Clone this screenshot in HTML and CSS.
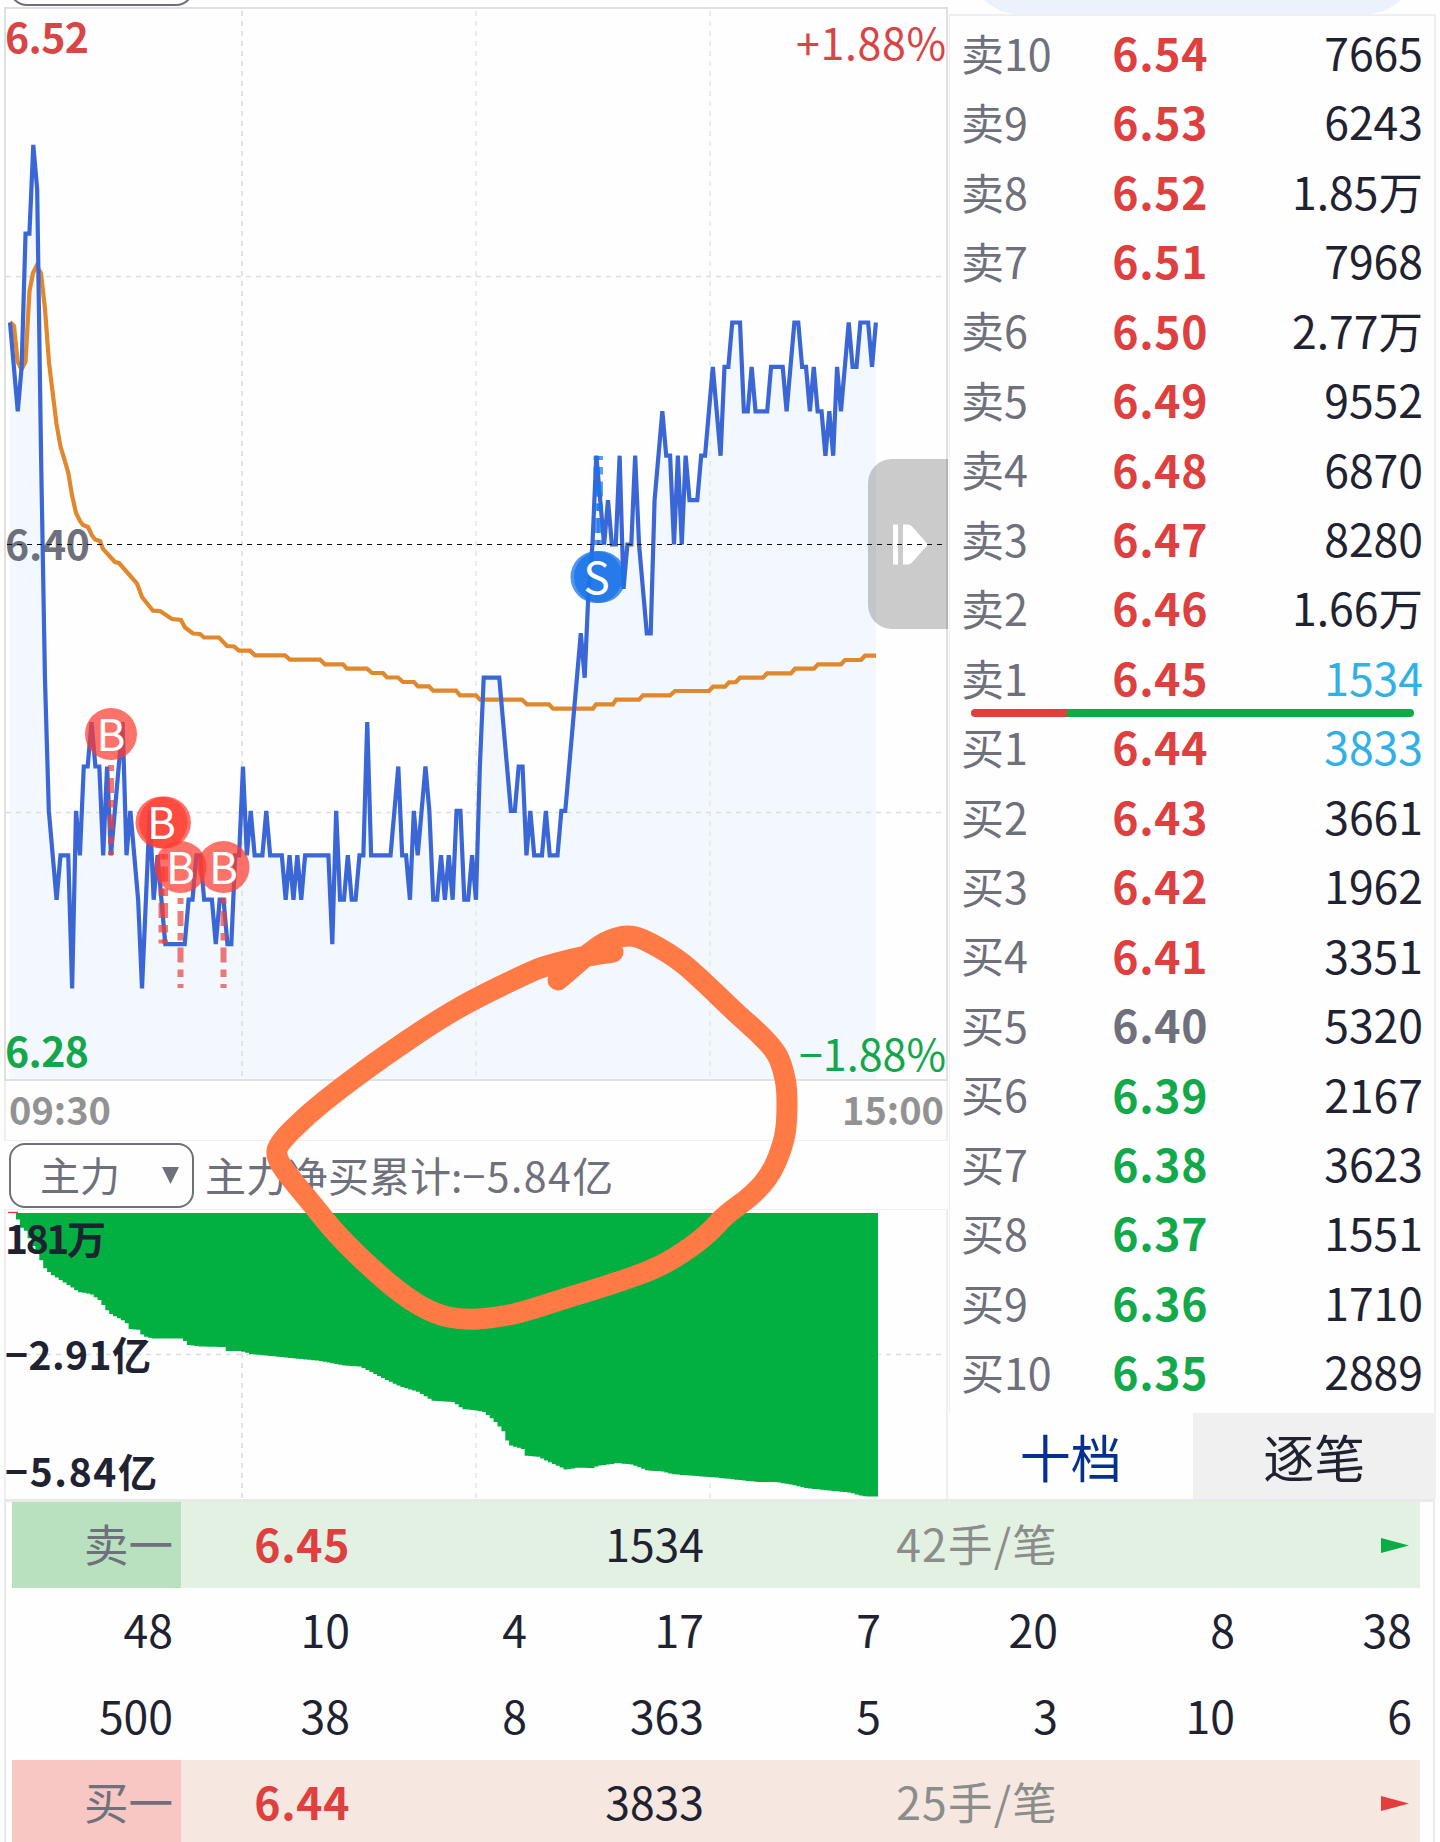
FILE: index.html
```html
<!DOCTYPE html>
<html lang="zh-CN">
<head>
    <meta charset="UTF-8">
    <title>分时</title>
    <link rel="stylesheet" href="styles.css">
</head>
<body>
    <div class="page">
        <div class="main">
            <div class="chart-col">
                <div class="chart-top"><div class="select-edge"></div></div>

                <svg class="price-chart" viewBox="6 9 940 1070">
                    <path id="priceArea" class="area"/>
                    <g class="grid">
                        <path d="M242 11V1079M6 276.5H946M6 812.5H946"/>
                        <path class="light" d="M476 11V1079M710 11V1079"/>
                    </g>
                    <text class="axis up" x="5" y="53" textLength="84">6.52</text>
                    <text class="axis flat" x="5" y="559.5" textLength="85">6.40</text>
                    <text class="axis down" x="5" y="1067" textLength="84">6.28</text>
                    <text class="rate up" x="796" y="60" textLength="150">+1.88%</text>
                    <text class="rate down" x="799" y="1070.5" textLength="147">−1.88%</text>
                    <polyline id="avgLine" class="avg"/>
                    <polyline id="priceLine" class="price"/>
                    <g id="marks"></g>
                    <path class="handle" d="M948 459H892a24 24 0 0 0-24 24v122a24 24 0 0 0 24 24h56z"/>
                    <path class="handle-icon" d="M893 524.500h5v40h-5zM903 524.500h5q2 0 4 2l16 18l-16 18q-2 2-4 2h-5z"/>
                    <path class="base" d="M7 544.500H943"/>
                </svg>

                <div class="times">
                    <span>09:30</span>
                    <span>15:00</span>
                </div>

                <div class="fund-head">
                    <div class="select">
                        <span>主力</span>
                        <svg width="17" height="17" viewBox="0 0 17 17"><path d="M0 0h17L8.500 17z"/></svg>
                    </div>
                    <span class="fund-title">主力净买累计:<span class="fund-sum">−5.84亿</span></span>
                </div>

                <svg class="fund-chart" viewBox="6 1210 940 289">
                    <g class="grid">
                        <path d="M242 1213V1499M6 1354.500H946"/>
                        <path class="light" d="M476 1213V1499M710 1213V1499"/>
                    </g>
                    <path id="fundBars" class="bars"/>
                    <path class="fund-start" d="M8 1212.500H18"/>
                    <text class="fund-label" x="5" y="1254" textLength="101">181万</text>
                    <text class="fund-label" x="5" y="1370" textLength="146">−2.91亿</text>
                    <text class="fund-label" x="5" y="1486.500" textLength="152">−5.84亿</text>
                </svg>
            </div>

            <div class="book-col">
                <div class="book-top"><div class="pill-edge"></div></div>
                <div class="book">
                    <div id="sells"></div>
                    <div class="ratio"><div class="ratio-sell"></div><div class="ratio-buy"></div></div>
                    <div id="buys"></div>
                </div>
                <div class="tabs">
                    <div class="tab active">十档</div>
                    <div class="tab">逐笔</div>
                </div>
            </div>
        </div>

        <div class="queue">
            <div class="queue-row sell">
                <span class="name">卖一</span><span class="cost">6.45</span><span></span><span>1534</span><span></span><span class="avg-hand">42手/笔</span><span></span>
                <span><svg width="28" height="15" viewBox="0 0 28 15"><path d="M0 0L28 7.500L0 15z"/></svg></span>
            </div>
            <div class="queue-row">
                <span>48</span><span>10</span><span>4</span><span>17</span><span>7</span><span>20</span><span>8</span><span>38</span>
            </div>
            <div class="queue-row">
                <span>500</span><span>38</span><span>8</span><span>363</span><span>5</span><span>3</span><span>10</span><span>6</span>
            </div>
            <div class="queue-row buy">
                <span class="name">买一</span><span class="cost">6.44</span><span></span><span>3833</span><span></span><span class="avg-hand">25手/笔</span><span></span>
                <span><svg width="28" height="15" viewBox="0 0 28 15"><path d="M0 0L28 7.500L0 15z"/></svg></span>
            </div>
        </div>

        <!-- hand-drawn mark over both charts -->
        <svg class="pen" viewBox="0 0 1440 1842">
            <path id="penLine"/>
        </svg>
    </div>

    <script src="script.js"></script>
</body>
</html>
```

FILE: styles.css
```css
* {
    box-sizing: border-box;
}

body {
    margin: 0;
    background-color: #fefefe;
    font-family: "Noto Sans CJK SC", sans-serif;
    color: #1e2231;
}

.page {
    position: relative;
    width: 1440px;
    height: 1842px;
    overflow: hidden;
}

.main {
    display: flex;
    height: 1499px;
}

/* left column */
.chart-col {
    width: 944px;
    margin-left: 4px;
}

.chart-top {
    height: 7px;
    padding-left: 5px;
    overflow: hidden;
}

.select-edge {
    width: 185px;
    height: 65px;
    margin-top: -59px;
    border: 2px solid #6e707c;
    border-radius: 18px;
}

.price-chart {
    display: block;
    width: 944px;
    height: 1074px;
    border: 2px solid #e0e0e1;
    overflow: visible;
}

.area {
    fill: #f2f8fd;
}

.grid path {
    fill: none;
    stroke: #dcdde0;
    stroke-width: 1.6;
    stroke-dasharray: 5 5;
}

.grid .light {
    stroke: #e6e7ea;
}

.avg, .price {
    fill: none;
    stroke-width: 4.2;
}

.avg {
    stroke: #e1872c;
}

.price {
    stroke: #3b66d6;
}

.base {
    stroke: #111;
    stroke-width: 1.2;
    stroke-dasharray: 5 5;
}

.axis {
    font-size: 41px;
    font-weight: bold;
}

.rate {
    font-size: 43px;
}

text.up {
    fill: #d94444;
}

text.flat {
    fill: #6e707c;
}

text.down {
    fill: #14a64b;
}

.handle {
    fill: #000;
    fill-opacity: 0.2;
}

.handle-icon {
    fill: #fff;
}

.mark-b {
    fill: #ff3b30;
    fill-opacity: 0.72;
}

.mark-s {
    fill: #1a73e8;
    fill-opacity: 0.76;
}

.stem {
    stroke-width: 6;
    stroke-dasharray: 15 7 7.5 7;
    stroke-dashoffset: 11;
    stroke-opacity: 0.7;
}

.stem-b {
    stroke: #e8423f;
}

.stem-s {
    stroke: #1a73e8;
}

.letter {
    font-size: 44px;
    fill: #fff;
    text-anchor: middle;
}

.times {
    display: flex;
    justify-content: space-between;
    align-items: center;
    height: 60px;
    padding: 0 2px 3px 3px;
    border: 2px solid #efeff0;
    border-width: 0 2px 1px;
    color: #929292;
    font-size: 38px;
    font-weight: bold;
    line-height: 1;
}

.fund-head {
    display: flex;
    align-items: center;
    height: 68px;
    padding-left: 5px;
}

.select {
    display: flex;
    justify-content: space-between;
    align-items: center;
    width: 185px;
    height: 65px;
    padding: 0 13px 2px 29px;
    border: 2px solid #6e707c;
    border-radius: 16px;
    color: #6e707c;
    font-size: 40px;
    line-height: 1;
}

.select svg {
    fill: #6e707c;
    margin-top: 3px;
}

.fund-title {
    margin-left: 11px;
    padding-bottom: 2px;
    color: #6e707c;
    font-size: 41px;
    line-height: 1;
}

.fund-sum {
    letter-spacing: 1.5px;
}

.fund-chart {
    display: block;
    width: 944px;
    height: 290px;
    border: 2px solid #efeff0;
    border-width: 1px 2px 0;
}

.bars {
    fill: #02af41;
}

.fund-start {
    stroke: #d94444;
    stroke-width: 1.5;
}

.fund-label {
    font-size: 39px;
    font-weight: bold;
    fill: #1e2231;
}

/* order book */
.book-col {
    display: flex;
    flex-direction: column;
    width: 487px;
    margin-left: 1px;
}

.book-top {
    height: 14px;
    overflow: hidden;
    padding-left: 20px;
}

.pill-edge {
    width: 447px;
    height: 100px;
    margin-top: -86px;
    border-radius: 50px;
    background-color: #eaf2fc;
}

.book {
    height: 1399px;
    padding-top: 4px;
    border: 2px solid #efeff0;
    border-width: 2px 2px 0 1px;
}

.level {
    display: grid;
    grid-template-columns: 130px 117px 1fr;
    align-items: center;
    height: 69.45px;
    padding: 0 11px 5px;
    font-size: 44.5px;
    line-height: 1;
    text-align: right;
}

.level .side {
    color: #6e707c;
    font-size: 43px;
    text-align: left;
}

.cost {
    color: #de4040;
    font-weight: bold;
    letter-spacing: 0.6px;
}

.cost.same {
    color: #6e707c;
}

.cost.low {
    color: #12a94a;
}

.vol.near {
    color: #30b0e4;
}

.ratio {
    display: flex;
    height: 8px;
    margin: -5px 20px -3px 21px;
    border-radius: 4px;
    overflow: hidden;
}

.ratio-sell {
    width: 96px;
    background-color: #e23e3e;
}

.ratio-buy {
    flex: 1;
    background-color: #0aac46;
}

.tabs {
    display: flex;
    height: 86px;
}

.tab {
    flex: 1;
    padding-top: 18px;
    background-color: #f0f0f1;
    font-size: 51px;
    line-height: 1;
    text-align: center;
}

.tab.active {
    background-color: #fefefe;
    color: #06308f;
}

/* first-level queue */
.queue {
    width: 1431px;
    margin-left: 4px;
    padding: 0 13px 0 6px;
    border: 2px solid #e8eae8;
    border-width: 3px 2px 0;
}

.queue-row {
    display: grid;
    grid-template-columns: 169px repeat(7, 1fr);
    height: 86.1px;
    font-size: 44.5px;
    line-height: 82px;
    text-align: right;
}

.queue-row span {
    padding-right: 8px;
}

.queue-row .name {
    color: #6e707c;
}

.avg-hand {
    color: #8b8d8b;
    white-space: nowrap;
    margin-left: -60px;
    letter-spacing: 1.2px;
}

.queue-row svg {
    display: block;
    margin: 36px 3px 0 auto;
}

.sell {
    background-color: #e3f1e3;
    fill: #0aac46;
}

.sell .name {
    background-color: #b9e1bf;
}

.buy {
    background-color: #f6e7e0;
    fill: #e23e3e;
}

.buy .name {
    background-color: #f8c7c4;
}

.pen {
    position: absolute;
    top: 0;
    left: 0;
    width: 1440px;
    height: 1842px;
    pointer-events: none;
}

.pen path {
    fill: none;
    stroke: #ff7a45;
    stroke-width: 21;
    stroke-linecap: round;
    stroke-linejoin: round;
}
```

FILE: script.js
```javascript
const STEP = 3.883;
const LEFT = 10;

// one value per minute, in cents above or below 6.40
const ticks = [
    5, 4, 3, 4, 7, 7, 9, 8, 2, -3, -6, -7, -8, -7, -7, -7, -10, -6, -7, -5,
    -5, -4, -5, -5, -7, -5, -7, -6, -5, -4, -7, -6, -7, -8, -10, -8, -6, -8, -7, -8,
    -9, -9, -9, -9, -9, -9, -8, -8, -7, -7, -8, -8, -8, -9, -8, -8, -9, -9, -7, -7,
    -5, -7, -6, -7, -7, -7, -6, -7, -7, -7, -7, -8, -7, -8, -7, -8, -7, -7, -7, -7,
    -7, -7, -7, -9, -6, -8, -8, -7, -8, -8, -7, -7, -4, -7, -7, -7, -7, -7, -7, -6,
    -5, -7, -7, -8, -6, -7, -6, -5, -6, -8, -8, -7, -8, -7, -8, -6, -6, -8, -8, -7,
    -8, -5, -3, -3, -3, -3, -3, -4, -5, -6, -6, -5, -5, -7, -6, -7, -7, -7, -6, -7,
    -7, -7, -6, -6, -5, -4, -3, -2, -3, -1, 0, 2, 1, 0, 1, 0, 0, 2, -1, 0,
    0, 2, 0, -1, -2, -2, 1, 2, 3, 2, 2, 0, 2, 0, 2, 1, 1, 1, 2, 2,
    3, 4, 3, 2, 4, 4, 5, 5, 5, 3, 3, 4, 3, 3, 3, 3, 4, 4, 4, 4,
    3, 4, 5, 5, 4, 4, 3, 4, 3, 3, 2, 3, 2, 4, 3, 4, 5, 4, 4, 5,
    5, 5, 4, 5
];

const average = [
    [10, 322], [14, 326], [17.7, 362], [21.5, 369.5], [25.5, 362], [29.5, 291], [33, 273], [36.500, 266], [41, 273],
    [45, 309], [49, 362.5], [52.7, 393], [56.5, 424], [60.5, 446.5], [64.5, 459.6], [68.3, 473], [72, 495],
    [76, 513], [80, 521], [83, 525], [88, 527], [91.7, 535], [95, 539.500], [100, 541], [103, 549], [115, 562], [119, 563], [137, 583.5],
    [142, 597], [153, 610.7], [160, 611], [172, 619], [181, 620], [185, 627.5], [193, 633.5], [200, 634],
    [204, 637.5], [219, 637.5], [227, 646], [234, 646.5], [239, 650.7], [250, 650.7], [255, 655.3], [285, 655.3],
    [290, 659.6], [320, 659.6], [325, 664.3], [343, 664.3], [347, 668.6], [367, 668.6], [372, 673], [383, 673],
    [387, 677.5], [398, 677.5], [403, 682], [414, 682], [418, 686.4], [429, 686.4], [433, 690.7], [456, 690.7],
    [460, 695.4], [476, 695.4], [480, 699.7], [522, 699.7], [527, 704.3], [549, 704.3], [553, 708.7], [593, 708.7],
    [596, 704.3], [613, 704.3], [616, 699.7], [639, 699.7], [643, 695.3], [670, 695.3], [675, 691], [709, 691],
    [713, 686.7], [725, 686.7], [729, 682.3], [736, 682], [740, 677.7], [763, 677.7], [767, 673.3], [791, 673.3],
    [795, 668.7], [814, 668.7], [818, 664.3], [841, 664.3], [845, 660], [861, 660], [865, 655.7], [876, 655.7]
];

// lower edge of the net inflow bars
const fund = [
    [16, 1217], [20, 1227], [25, 1231], [28, 1237], [33, 1247], [39, 1257], [43, 1267], [50, 1274], [58, 1279],
    [69, 1286], [78, 1292], [90, 1294], [100, 1301], [105, 1309], [110, 1314], [125, 1322], [129, 1329], [139, 1330],
    [142, 1336], [152, 1338.5], [182, 1338.5], [187, 1345], [200, 1346.5], [224, 1347], [226, 1351], [240, 1351],
    [250, 1354], [290, 1358], [320, 1361], [343, 1365.5], [360, 1366.7], [372, 1372.7], [388, 1381], [400, 1386.7],
    [417, 1391.7], [432, 1400.7], [453, 1402], [462, 1409], [476, 1410.5], [483, 1412], [493, 1420], [503, 1432],
    [508, 1445], [522, 1449], [524, 1455.7], [537, 1456.7], [553, 1464], [565, 1469.7], [577, 1467.7], [592, 1468],
    [597, 1466], [617, 1463], [632, 1464.7], [647, 1470.7], [660, 1471], [673, 1474.3], [717, 1477.7], [757, 1482],
    [775, 1482], [793, 1485], [803, 1487.7], [823, 1490], [850, 1492.7], [862, 1496.3], [878, 1496.7]
];

const pen = [
    [558, 980], [572, 968], [588, 954], [606, 941], [626, 935], [642, 938], [677, 958], [703, 981], [737, 1014],
    [760, 1034], [777, 1053], [783, 1069], [787, 1088], [787, 1120], [784, 1142], [772, 1173], [753, 1195],
    [724, 1216], [713, 1229], [693, 1246], [660, 1267], [613, 1284], [563, 1299], [520, 1313], [492, 1318],
    [466, 1320], [436, 1315], [402, 1295], [360, 1258], [332, 1229], [313, 1205], [287, 1174], [276, 1157],
    [278, 1144], [307, 1115], [342, 1087], [383, 1057], [433, 1023], [472, 1000], [530, 972], [545, 966], [585, 956], [613, 952]
];

const toPoints = list => list.map(p => p.join(',')).join(' ');
const line = ticks.map((t, i) => [LEFT + i * STEP, 544.5 - t * 44.4]);

document.getElementById('priceLine').setAttribute('points', toPoints(line));
document.getElementById('avgLine').setAttribute('points', toPoints(average));
document.getElementById('priceArea').setAttribute('d', 'M10 1079L' + toPoints(line) + 'L876 1079z');

function fundAt(x) {
    for (let i = 1; i < fund.length; i++) {
        if (x <= fund[i][0]) {
            const [x1, y1] = fund[i - 1];
            const [x2, y2] = fund[i];
            return y1 + (y2 - y1) * (x - x1) / (x2 - x1);
        }
    }
    return fund[fund.length - 1][1];
}

let bars = 'M16 1213';
for (let x = 16; x < 877; x += STEP) {
    bars += 'V' + fundAt(x + 1).toFixed(1) + 'H' + Math.min(x + STEP, 878).toFixed(1);
}
document.getElementById('fundBars').setAttribute('d', bars + 'V1213z');

// smooth the pen stroke through the midpoints
let stroke = 'M' + pen[0];
for (let i = 1; i < pen.length - 1; i++) {
    stroke += 'Q' + pen[i] + ' ' + (pen[i][0] + pen[i + 1][0]) / 2 + ',' + (pen[i][1] + pen[i + 1][1]) / 2;
}
document.getElementById('penLine').setAttribute('d', stroke + 'L' + pen[pen.length - 1]);

// type, letter, x, circle y, stem from, stem to
const marks = [
    ['b', 'B', 111, 734, 855, 765],
    ['b', '', 165, 822.5, 943.5, 854],
    ['b', 'B', 161.5, 822.5, 943.5, 854],
    ['b', 'B', 180.5, 867, 988, 898],
    ['b', 'B', 223.5, 867, 988, 898],
    ['s', '', 600, 577, 456, 545],
    ['s', 'S', 596.5, 577, 456, 545]
];
document.getElementById('marks').innerHTML = marks.map(([type, letter, x, y, from, to]) => `
    <path class="stem stem-${type}" d="M${x} ${from}V${to}"/>
    <circle class="mark-${type}" cx="${x}" cy="${y}" r="26"/>
    <text class="letter" x="${x}" y="${y + 16.5}">${letter}</text>`).join('');

const sells = [
    ['6.54', '7665'], ['6.53', '6243'], ['6.52', '1.85万'], ['6.51', '7968'], ['6.50', '2.77万'],
    ['6.49', '9552'], ['6.48', '6870'], ['6.47', '8280'], ['6.46', '1.66万'], ['6.45', '1534']
];
const buys = [
    ['6.44', '3833'], ['6.43', '3661'], ['6.42', '1962'], ['6.41', '3351'], ['6.40', '5320'],
    ['6.39', '2167'], ['6.38', '3623'], ['6.37', '1551'], ['6.36', '1710'], ['6.35', '2889']
];

function level(side, n, price, vol) {
    const tone = price === '6.40' ? ' same' : price < '6.40' ? ' low' : '';
    return `<div class="level">
        <span class="side">${side}${n}</span>
        <span class="cost${tone}">${price}</span>
        <span class="vol${n === 1 ? ' near' : ''}">${vol}</span>
    </div>`;
}

document.getElementById('sells').innerHTML = sells.map((r, i) => level('卖', 10 - i, r[0], r[1])).join('');
document.getElementById('buys').innerHTML = buys.map((r, i) => level('买', i + 1, r[0], r[1])).join('');
```
